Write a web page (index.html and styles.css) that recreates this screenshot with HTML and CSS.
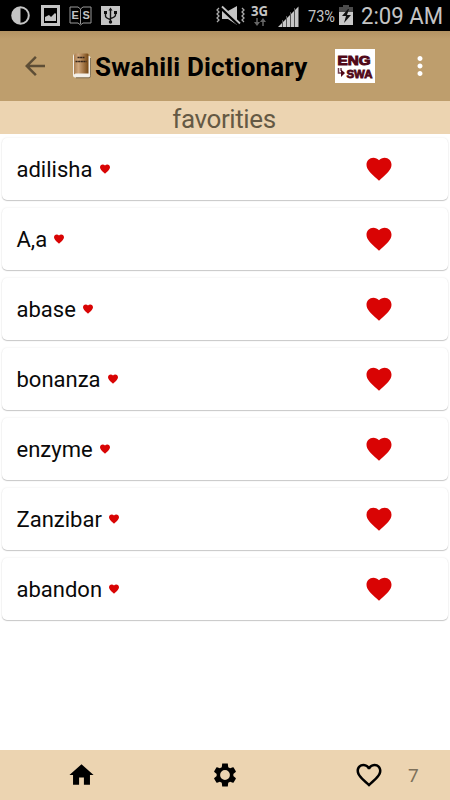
FILE: index.html
```
<!DOCTYPE html>
<html lang="en">
<head>
<meta charset="utf-8">
<title>Swahili Dictionary</title>
<link rel="stylesheet" href="styles.css">
</head>
<body>
<svg class="defs" width="0" height="0">
  <symbol id="heart" viewBox="0 0 24 24"><path d="M12 21.35l-1.45-1.32C5.4 15.36 2 12.28 2 8.5 2 5.42 4.42 3 7.5 3c1.74 0 3.41.81 4.5 2.09C13.09 3.81 14.76 3 16.5 3 19.58 3 22 5.42 22 8.5c0 3.78-3.4 6.86-8.55 11.54L12 21.35z"/></symbol>
</svg>
<div class="status">
  <svg class="notifications" width="130" height="31" viewBox="0 0 130 31">
    <circle cx="20.500" cy="15.500" r="8.300" fill="none" stroke="#c4c4c4" stroke-width="2"/>
    <path d="M20.500 7a8.500 8.500 0 0 0 0 17z" fill="#c4c4c4"/>
    <path fill="#c4c4c4" fill-rule="evenodd" d="M41 5h19v21H41zM44 8v15h13V8z"/>
    <path fill="#c4c4c4" d="M45 21v-4l4-2 2 2 4-4 1 1v7z"/>
    <path d="M70 7h8l2.500 2L83 7h8v16h-8l-2.500 2-2.500-2h-8zM80.500 9v15" fill="none" stroke="#999" stroke-width="1"/>
    <text class="es" x="71.500" y="19">E</text><text class="es" x="82.500" y="19">S</text>
    <path fill="#c4c4c4" d="M101 6h19v19h-19z"/>
    <path d="M110.500 10v13M105.500 12v4q0 2 5 3.500M115.500 11v4q0 2-5 3.500" fill="none" stroke="#111" stroke-width="1.400"/>
    <path d="M108.500 10.500l2-3 2 3zM104 11h3v3h-3zM114 11h3v3h-3z" fill="#111"/>
    <circle cx="110.500" cy="22" r="1.700" fill="#111"/>
  </svg>
  <svg class="signals" width="235" height="31" viewBox="215 0 235 31">
    <path d="M219 8l-2 2 2 2-2 2 2 2-2 2 2 2-2 2M242 8l2 2-2 2 2 2-2 2 2 2-2 2 2 2" fill="none" stroke="#aaa" stroke-width="1.300"/>
    <path d="M222 11h6l9-5v19l-9-6h-6z" fill="#c4c4c4"/>
    <path d="M221 8l18 17" stroke="#000" stroke-width="3"/>
    <path d="M222 6.500l18 17" stroke="#c4c4c4" stroke-width="1.800"/>
    <text class="network" x="251" y="16" textLength="17" lengthAdjust="spacingAndGlyphs">3G</text>
    <path d="M257 18v6M263 26v-6" stroke="#666" stroke-width="1.500"/>
    <path d="M254 22h6l-3 4zM260 22h6l-3-4z" fill="#666"/>
    <path d="M278 27L298.500 6.500V27z" fill="#c8c8c8"/>
    <path d="M282.500 20v7M286.500 16v11M290.500 12v15M294.500 8v19" stroke="#555" stroke-width="1"/>
    <text class="percent" x="308" y="21.500" textLength="27" lengthAdjust="spacingAndGlyphs">73%</text>
    <path d="M339 7h4V5h6v2h4v5h-14z" fill="#4b4b4b"/>
    <path d="M339 12h14v13h-14z" fill="#c8c8c8"/>
    <path d="M348 9l-6 7h4l-2 7 7-8h-4l2-6z" fill="#111"/>
    <text class="clock" x="361" y="23.500" textLength="82" lengthAdjust="spacingAndGlyphs">2:09 AM</text>
  </svg>
</div>
<header class="appbar">
  <svg class="back" width="30" height="30" viewBox="0 0 24 24"><path d="M20 11H7.830l5.590-5.590L12 4l-8 8 8 8 1.410-1.410L7.830 13H20v-2z"/></svg>
  <svg class="book" width="20" height="26" viewBox="0 0 20 26">
    <defs><linearGradient id="leather"><stop offset="0" stop-color="#a87d50"/><stop offset=".3" stop-color="#d0a77c"/><stop offset="1" stop-color="#764713"/></linearGradient></defs>
    <path d="M1 3q0-2 2-2l14 2q1.500 0 1.500 2v18q0 1.500-2 1.500H3q-2 0-2-2z" fill="#f4f0e8"/>
    <path d="M4 24.800h13q1.500 0 1.500-2V5" fill="none" stroke="#6e6047" stroke-width=".8"/>
    <path d="M2 2q0-1.500 1.500-1.500H15q1.500 0 1.500 1V20.500H3.500l-1.500 1z" fill="url(#leather)"/>
    <path d="M5.500 4.500h7M3.500 8.500h11" stroke="#35251a" stroke-width="1.700" stroke-dasharray="2.200 .4"/>
  </svg>
  <h1 class="title">Swahili Dictionary</h1>
  <svg class="lang" width="40" height="34" viewBox="0 0 40 34">
    <path fill="#fff" d="M0 0h40v34H0z"/>
    <text class="code" x="2.500" y="15.500" textLength="33" lengthAdjust="spacingAndGlyphs">ENG</text>
    <text class="code small" x="11.500" y="28.500" textLength="26" lengthAdjust="spacingAndGlyphs">SWA</text>
    <path fill="none" stroke="#714050" stroke-width="1.500" d="M3.500 19v5h4M6 19v3"/>
    <path fill="#500818" d="M6 20.500l4 3.500-4 4z"/>
  </svg>
  <svg class="more" width="30" height="30" viewBox="0 0 24 24"><path d="M12 8c1.100 0 2-.9 2-2s-.9-2-2-2-2 .9-2 2 .9 2 2 2zm0 2c-1.100 0-2 .9-2 2s.9 2 2 2 2-.9 2-2-.9-2-2-2zm0 6c-1.100 0-2 .9-2 2s.9 2 2 2 2-.9 2-2-.9-2-2-2z"/></svg>
</header>
<div class="subtitle"><span>favorities</span></div>
<main class="list">
  <div class="card"><span class="word">adilisha</span><svg class="mark"><use href="#heart"/></svg><svg class="fav"><use href="#heart"/></svg></div>
  <div class="card"><span class="word">A,a</span><svg class="mark"><use href="#heart"/></svg><svg class="fav"><use href="#heart"/></svg></div>
  <div class="card"><span class="word">abase</span><svg class="mark"><use href="#heart"/></svg><svg class="fav"><use href="#heart"/></svg></div>
  <div class="card"><span class="word">bonanza</span><svg class="mark"><use href="#heart"/></svg><svg class="fav"><use href="#heart"/></svg></div>
  <div class="card"><span class="word">enzyme</span><svg class="mark"><use href="#heart"/></svg><svg class="fav"><use href="#heart"/></svg></div>
  <div class="card"><span class="word">Zanzibar</span><svg class="mark"><use href="#heart"/></svg><svg class="fav"><use href="#heart"/></svg></div>
  <div class="card"><span class="word">abandon</span><svg class="mark"><use href="#heart"/></svg><svg class="fav"><use href="#heart"/></svg></div>
</main>
<nav class="tabs">
  <svg class="home" width="29" height="30" viewBox="0 0 24 24"><path d="M10 20v-6h4v6h5v-8h3L12 3 2 12h3v8z"/></svg>
  <svg class="gear" width="28" height="28" viewBox="0 0 24 24"><path d="M19.140 12.940c.04-.3.060-.61.060-.94 0-.32-.02-.64-.07-.94l2.030-1.580c.18-.14.230-.41.120-.61l-1.920-3.320c-.12-.22-.37-.29-.59-.22l-2.390.96c-.5-.38-1.030-.7-1.620-.94L14.400 2.200H9.600l-.36 3.150c-.59.240-1.130.57-1.620.94l-2.390-.96c-.22-.08-.47 0-.59.220L2.740 8.870c-.12.210-.08.470.12.610l2.030 1.580c-.05.3-.09.630-.09.940s.02.640.07.940l-2.030 1.580c-.18.140-.23.410-.12.610l1.920 3.320c.12.220.37.290.59.220l2.390-.96c.5.380 1.030.7 1.620.94l.36 3.150h4.800l.36-3.150c.59-.24 1.130-.56 1.620-.94l2.390.96c.22.080.47 0 .59-.22l1.920-3.320c.12-.22.070-.47-.12-.61l-2.010-1.580zM12 16.200A4.200 4.200 0 1 1 12 7.800a4.200 4.200 0 0 1 0 8.400z"/></svg>
  <svg class="saved" width="30" height="30" viewBox="0 0 24 24"><path d="M16.500 3c-1.740 0-3.410.81-4.500 2.090C10.910 3.810 9.240 3 7.500 3 4.420 3 2 5.420 2 8.500c0 3.780 3.400 6.860 8.550 11.540L12 21.350l1.450-1.320C18.600 15.360 22 12.280 22 8.500 22 5.420 19.580 3 16.500 3zm-4.400 15.550l-.1.100-.1-.1C7.140 14.240 4 11.390 4 8.500 4 6.500 5.500 5 7.500 5c1.540 0 3.040.99 3.570 2.360h1.870C13.460 5.990 14.960 5 16.500 5c2 0 3.500 1.500 3.500 3.500 0 2.890-3.140 5.740-7.900 10.050z"/></svg>
  <span class="count">7</span>
</nav>
</body>
</html>
```
FILE: styles.css
```
* { box-sizing: border-box; }
body {
  margin: 0;
  width: 450px;
  height: 800px;
  display: flex;
  flex-direction: column;
  background: #fff;
  font-family: Roboto, sans-serif;
  overflow: hidden;
}
svg { display: block; flex: none; }
.defs { display: none; }
.status {
  height: 31px;
  background: #000;
  display: flex;
  justify-content: space-between;
  flex: none;
}
.status text { fill: #c4c4c4; }
.es { font: bold 11px "Liberation Sans", sans-serif; }
.network { font: bold 14px "Open Sans", sans-serif; }
.percent { font-size: 16px; }
.clock { font-size: 24px; }
.appbar {
  height: 70px;
  flex: none;
  display: flex;
  align-items: center;
  background: linear-gradient(#b39363, #be9e6d 8px);
}
.back { margin-left: 20px; fill: #5e4e36; }
.book { margin-left: 22px; }
.title {
  margin: 2px 0 0 3px;
  width: 213px;
  font-size: 26px;
  line-height: 32px;
  font-weight: 700;
  letter-spacing: 0.15px;
  white-space: nowrap;
}
.lang { margin-left: 27px; }
.code {
  font: bold 13px "Liberation Sans", sans-serif;
  fill: #500818;
  stroke: #500818;
  stroke-width: 1px;
}
.code.small { font-size: 11.5px; stroke-width: .8px; }
.more { margin-left: 30px; fill: #fff; }
.subtitle {
  height: 33px;
  flex: none;
  background: #ecd4b1;
  color: #645944;
  font-size: 26px;
  line-height: 36px;
  letter-spacing: -0.4px;
  text-align: center;
}
.subtitle span { margin-right: 2px; }
.list {
  flex: 1;
  display: flex;
  flex-direction: column;
  gap: 8px;
  padding: 4px 2px 0 2px;
}
.card {
  height: 62px;
  display: flex;
  align-items: center;
  padding: 0 54px 0 14px;
  border-radius: 5px;
  background: #fff;
  box-shadow: 0 1px 1px rgba(0,0,0,.2), 0 0 2px rgba(0,0,0,.1);
}
.word { font-size: 22px; line-height: 30px; color: #0a0a0a; margin-top: 2px; padding-left: .5px; }
.mark { width: 12px; height: 12px; margin-left: 6.3px; fill: #d90404; }
.fav { width: 30px; height: 30px; margin-left: auto; fill: #d90404; }
.tabs {
  height: 50px;
  flex: none;
  display: flex;
  align-items: center;
  background: #ecd4b1;
}
.home { margin-left: 67px; }
.gear { margin-left: 115px; }
.saved { margin-left: 115px; }
.count { margin-left: 24px; font-size: 19px; color: #7d705a; }
```
